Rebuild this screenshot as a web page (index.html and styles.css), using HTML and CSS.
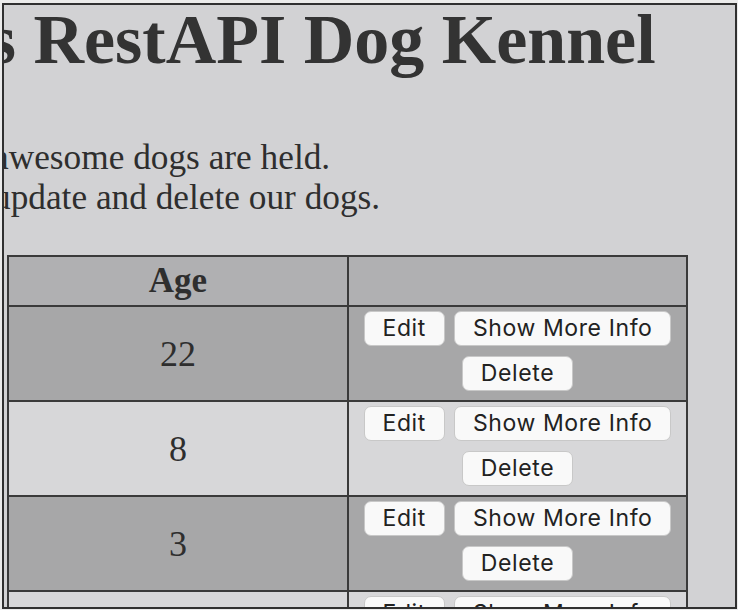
FILE: index.html
```html
<!DOCTYPE html>
<html lang="en">
<head>
<meta charset="utf-8">
<title>RestAPI Dog Kennel</title>
<link rel="stylesheet" href="styles.css">
</head>
<body>
<div class="frame">
  <div class="page">
    <h1 class="title">Eric's RestAPI Dog Kennel</h1>
    <p class="intro">awesome dogs are held.<br>update and delete our dogs.</p>
    <table class="dogs">
      <thead>
        <tr><th class="col-age">Age</th><th class="col-actions"></th></tr>
      </thead>
      <tbody>
        <tr class="dark">
          <td class="age">22</td>
          <td class="actions"><div class="btns"><button class="btn">Edit</button><button class="btn">Show More Info</button><button class="btn">Delete</button></div></td>
        </tr>
        <tr class="light">
          <td class="age">8</td>
          <td class="actions"><div class="btns"><button class="btn">Edit</button><button class="btn">Show More Info</button><button class="btn">Delete</button></div></td>
        </tr>
        <tr class="dark">
          <td class="age">3</td>
          <td class="actions"><div class="btns"><button class="btn">Edit</button><button class="btn">Show More Info</button><button class="btn">Delete</button></div></td>
        </tr>
        <tr class="light">
          <td class="age">5</td>
          <td class="actions"><div class="btns"><button class="btn">Edit</button><button class="btn">Show More Info</button><button class="btn">Delete</button></div></td>
        </tr>
      </tbody>
    </table>
  </div>
</div>
</body>
</html>
```
FILE: styles.css
```css
html, body {
  margin: 0;
  padding: 0;
  background: #ebebeb;
}
body {
  padding: 3px 1px 0 2px;
  height: 610px;
  box-sizing: border-box;
  overflow: hidden;
}
.frame {
  width: 735px;
  height: 606px;
  box-sizing: border-box;
  border: 2px solid #303030;
  background: #d2d2d4;
  overflow: hidden;
}
.page {
  font-family: "Liberation Serif", "Times New Roman", serif;
  color: #2e2e2e;
}
.title {
  font-size: 70px;
  line-height: 80px;
  font-weight: bold;
  margin: -5px 0 0 -163px;
  white-space: nowrap;
  color: #333;
}
.intro {
  font-size: 35.3px;
  line-height: 40px;
  margin: 58px 0 0 -11px;
  white-space: nowrap;
}
.dogs {
  margin: 37px 0 0 3px;
  border-collapse: collapse;
  border: 2px solid #3a3a3a;
}
.dogs th, .dogs td {
  border: 2px solid #3a3a3a;
  padding: 0;
  text-align: center;
}
.dogs thead tr {
  background: #b0b0b2;
  height: 50px;
}
.dogs th {
  font-size: 35px;
  font-weight: bold;
}
.col-age {
  width: 338px;
}
.col-actions {
  width: 337px;
}
.dogs tbody tr {
  height: 95px;
}
.dark { background: #a7a7a8; }
.light { background: #d7d7d9; }
.age {
  font-size: 36px;
  padding-bottom: 4px;
}
.dogs td.actions {
  padding: 4px 8px 0;
  vertical-align: top;
}
.btns {
  display: flex;
  flex-wrap: wrap;
  justify-content: center;
  gap: 10px 9px;
  width: 320px;
  margin: 0 auto;
}
.btn {
  font-family: "Inter", "Liberation Sans", sans-serif;
  font-size: 23px;
  letter-spacing: 0.6px;
  color: #222;
  background: #f9f9f9;
  border: 1px solid #c8c8c8;
  border-radius: 7px;
  height: 35px;
  padding: 0 18px;
  line-height: 33px;
}
```
